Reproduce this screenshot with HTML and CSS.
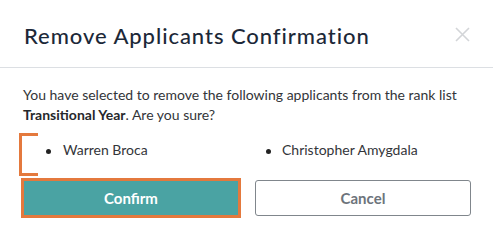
FILE: index.html
```html
<!DOCTYPE html>
<html lang="en">
<head>
<meta charset="utf-8">
<title>Remove Applicants Confirmation</title>
<link rel="stylesheet" href="styles.css">
</head>
<body>
<div class="modal">
  <div class="modal-header">
    <h2 class="modal-title">Remove Applicants Confirmation</h2>
    <button class="close-btn" aria-label="Close">
      <svg width="15" height="15" viewBox="0 0 15 15"><path d="M1 1 L14 14 M14 1 L1 14" stroke="#d3d5d8" stroke-width="1.6" fill="none"/></svg>
    </button>
  </div>
  <div class="modal-body">
    <p class="message">You have selected to remove the following applicants from the rank list <strong>Transitional Year</strong>. Are you sure?</p>
    <ul class="applicants">
      <li class="applicant">Warren Broca</li>
      <li class="applicant">Christopher Amygdala</li>
    </ul>
    <div class="actions">
      <button class="btn btn-confirm">Confirm</button>
      <button class="btn btn-cancel">Cancel</button>
    </div>
  </div>
</div>
</body>
</html>
```
FILE: styles.css
```css
* { box-sizing: border-box; }
html, body { margin: 0; padding: 0; background: #fff; }
body { font-family: Lato, "Liberation Sans", sans-serif; width: 493px; height: 238px; overflow: hidden; }
.modal { width: 493px; }
.modal-header {
  display: flex;
  align-items: flex-start;
  justify-content: space-between;
  padding: 22px 23px 16px 24px;
  border-bottom: 1px solid #dcdfe3;
  height: 68px;
}
.modal-title {
  margin: 0;
  font-size: 22px;
  line-height: 28px;
  font-weight: 500;
  color: #1c2838;
  letter-spacing: 0.95px;
}
.close-btn {
  border: 0;
  background: none;
  padding: 0;
  margin: 5px 0 0 0;
  width: 15px;
  height: 15px;
  display: flex;
}
.modal-body { padding: 17px 22px 0 23px; position: relative; }
.message {
  margin: 0;
  font-size: 14px;
  line-height: 20px;
  color: #333539;
}
.message strong { font-weight: 700; color: #26282b; }
.applicants {
  list-style: none;
  margin: 15px 0 0 0;
  padding: 0 0 0 40px;
  display: grid;
  grid-template-columns: 219px 1fr;
  position: relative;
}
.applicants::before {
  content: "";
  position: absolute;
  left: -4px;
  top: -7px;
  width: 16px;
  height: 37px;
  border: 3px solid #e4793d;
  border-right: 0;
}
.applicant {
  position: relative;
  font-size: 14px;
  line-height: 20px;
  color: #333539;
}
.applicant::before {
  content: "";
  position: absolute;
  left: -17px;
  top: 9px;
  width: 5px;
  height: 5px;
  border-radius: 50%;
  background: #222;
}
.applicant + .applicant::before { left: -16px; }
.actions {
  display: grid;
  grid-template-columns: 216px 216px;
  gap: 16px;
  margin-top: 20px;
}
.btn {
  height: 36px;
  font-family: Lato, "Liberation Sans", sans-serif;
  font-size: 15px;
  font-weight: 700;
  border-radius: 3px;
  padding: 0;
}
.btn-confirm {
  background: #4aa3a3;
  color: #fff;
  border: 1px solid #4aa3a3;
  outline: 3px solid #e4793d;
  outline-offset: -1px;
  border-radius: 0;
}
.btn-cancel {
  background: #fff;
  color: #6d747b;
  border: 1px solid #80868c;
}
```
